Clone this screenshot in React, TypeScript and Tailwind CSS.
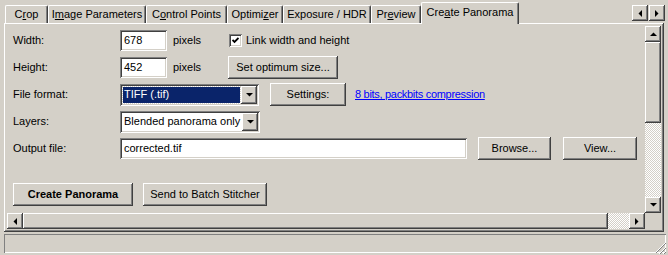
import React from "react";

const raised =
  "bg-[#d4d0c8] shadow-[inset_-1px_-1px_#404040,inset_1px_1px_#ffffff,inset_-2px_-2px_#808080,inset_2px_2px_#d4d0c8]";
const raisedEdge =
  "shadow-[inset_-1px_-1px_#404040,inset_1px_1px_#ffffff,inset_-2px_-2px_#808080,inset_2px_2px_#d4d0c8]";
const sunken =
  "bg-white shadow-[inset_1px_1px_#808080,inset_-1px_-1px_#ffffff,inset_2px_2px_#404040,inset_-2px_-2px_#d4d0c8]";
const dither =
  "bg-[repeating-conic-gradient(#ffffff_0_25%,#d4d0c8_0_50%)] bg-[length:2px_2px]";

function Arrow({ dir }: { dir: "up" | "down" | "left" | "right" }) {
  const pts = {
    up: "0,4 7,4 3.5,0.5",
    down: "0,0 7,0 3.5,3.5",
    left: "4,0 4,7 0.5,3.5",
    right: "0,0 0,7 3.5,3.5",
  }[dir];
  const vertical = dir === "up" || dir === "down";
  return (
    <svg width={vertical ? 7 : 4} height={vertical ? 4 : 7} viewBox={vertical ? "0 0 7 4" : "0 0 4 7"}>
      <polygon points={pts} fill="#000" />
    </svg>
  );
}

function ArrowButton({ dir, className = "" }: { dir: "up" | "down" | "left" | "right"; className?: string }) {
  return (
    <div className={`w-[16px] h-[16px] shrink-0 flex items-center justify-center ${raised} ${className}`}>
      <Arrow dir={dir} />
    </div>
  );
}

function Button({ children, w, bold = false }: { children: React.ReactNode; w: string; bold?: boolean }) {
  return (
    <div className={`${w} h-[23px] shrink-0 flex items-center justify-center ${raised} ${bold ? "font-bold" : ""}`}>
      {children}
    </div>
  );
}

function Combo({ value, w, selected = false }: { value: string; w: string; selected?: boolean }) {
  return (
    <div className={`${w} h-[22px] shrink-0 flex items-center p-[2px] ${sunken}`}>
      <div className="flex-1 h-full flex items-center pl-[1px] pr-[1px]">
        <div
          className={`flex-1 h-[16px] flex items-center pl-[1px] ${
            selected ? "bg-[#0a246a] text-white outline outline-1 outline-dotted outline-[#d4d0c8]" : ""
          }`}
        >
          {value}
        </div>
      </div>
      <ArrowButton dir="down" className="h-[18px]" />
    </div>
  );
}

function Field({ value, w }: { value: string; w: string }) {
  return (
    <div className={`${w} h-[21px] shrink-0 flex items-center pl-[4px] ${sunken}`}>{value}</div>
  );
}

const tabs = [
  { label: <>C<u>r</u>op</>, w: "w-[43px]" },
  { label: <>I<u>m</u>age Parameters</>, w: "w-[98px]" },
  { label: <>C<u>o</u>ntrol Points</>, w: "w-[81px]" },
  { label: <>Optimi<u>z</u>er</>, w: "w-[56px]" },
  { label: <>Exposure / HDR</>, w: "w-[88px]" },
  { label: <>Pr<u>e</u>view</>, w: "w-[50px]" },
];

export default function App() {
  return (
    <div className="w-[668px] h-[255px] bg-[#d4d0c8] font-['Liberation_Sans',Arial,sans-serif] text-[11px] text-black flex flex-col overflow-hidden leading-none">
      {/* Tab strip */}
      <div className="h-[23px] flex items-end pl-[5px] pr-[3px] relative z-10 shrink-0">
        {tabs.map((t, i) => (
          <div
            key={i}
            className={`${t.w} h-[18px] shrink-0 flex items-center justify-center border-l border-t border-white border-r border-r-[#404040] rounded-t-[2px] shadow-[inset_-1px_0_#808080]`}
          >
            {t.label}
          </div>
        ))}
        <div className="w-[98px] h-[22px] -mb-[1px] pb-[3px] shrink-0 flex items-center justify-center bg-[#d4d0c8] border-l border-t border-white border-r border-r-[#404040] rounded-t-[2px] shadow-[inset_-1px_0_#808080]">
          Cre<u>a</u>te Panorama
        </div>
        <div className="ml-auto self-start mt-[5px] flex gap-[1px]">
          <ArrowButton dir="left" />
          <ArrowButton dir="right" />
        </div>
      </div>

      {/* Panel */}
      <div className={`mx-[4px] h-[209px] shrink-0 p-[3px] flex flex-col ${raisedEdge}`}>
        <div className="flex-1 flex min-h-0">
          {/* Content */}
          <div className="flex-1 pl-[6px] pt-[4px] flex flex-col gap-[6px]">
            <div className="flex items-center h-[21px]">
              <div className="w-[107px] shrink-0">Width:</div>
              <Field value="678" w="w-[47px]" />
              <div className="w-[62px] shrink-0 pl-[6px]">pixels</div>
              <div className={`w-[13px] h-[13px] shrink-0 flex items-center justify-center ${sunken}`}>
                <svg width="7" height="7" viewBox="0 0 7 7">
                  <polyline points="0.5,3 2.5,5 6.5,1" fill="none" stroke="#000" strokeWidth="1.8" />
                </svg>
              </div>
              <div className="pl-[4px]">Link width and height</div>
            </div>
            <div className="flex items-center h-[21px]">
              <div className="w-[107px] shrink-0">Height:</div>
              <Field value="452" w="w-[47px]" />
              <div className="w-[61px] shrink-0 pl-[6px]">pixels</div>
              <Button w="w-[110px]">Set optimum size...</Button>
            </div>
            <div className="flex items-center h-[21px]">
              <div className="w-[107px] shrink-0">File format:</div>
              <Combo value="TIFF (.tif)" w="w-[139px]" selected />
              <div className="ml-[11px]">
                <Button w="w-[76px]">Settings:</Button>
              </div>
              <span className="ml-[9px] text-[#0000ff] underline tracking-[-0.3px]">8 bits, packbits compression</span>
            </div>
            <div className="flex items-center h-[21px]">
              <div className="w-[107px] shrink-0">Layers:</div>
              <Combo value="Blended panorama only" w="w-[140px]" />
            </div>
            <div className="flex items-center h-[21px]">
              <div className="w-[107px] shrink-0">Output file:</div>
              <Field value="corrected.tif" w="w-[347px]" />
              <div className="ml-[11px]">
                <Button w="w-[73px]">Browse...</Button>
              </div>
              <div className="ml-[12px]">
                <Button w="w-[74px]">View...</Button>
              </div>
            </div>
            <div className="flex items-center gap-[10px] mt-[18px]">
              <Button w="w-[120px]" bold>
                Create Panorama
              </Button>
              <Button w="w-[124px]">Send to Batch Stitcher</Button>
            </div>
          </div>
          {/* Vertical scrollbar */}
          <div className="w-[16px] shrink-0 flex flex-col">
            <ArrowButton dir="up" />
            <div className={`h-[81px] shrink-0 ${raised}`} />
            <div className={`flex-1 ${dither}`} />
            <ArrowButton dir="down" />
          </div>
        </div>
        {/* Horizontal scrollbar */}
        <div className="h-[16px] shrink-0 flex">
          <ArrowButton dir="left" />
          <div className={`flex-1 ${raised}`} />
          <div className={`w-[21px] shrink-0 ${dither}`} />
          <ArrowButton dir="right" />
          <div className="w-[16px] shrink-0" />
        </div>
      </div>

      {/* Status bar */}
      <div className="mx-[4px] mr-[2px] mt-[2px] h-[19px] shrink-0 flex justify-end items-end shadow-[inset_1px_1px_#808080,inset_-1px_-1px_#ffffff]">
        <svg width="12" height="12" viewBox="0 0 12 12" className="mb-[-1px]">
          <line x1="11" y1="1" x2="1" y2="11" stroke="#ffffff" />
          <line x1="12" y1="1" x2="2" y2="11" stroke="#808080" />
          <line x1="12" y1="5" x2="5" y2="12" stroke="#ffffff" />
          <line x1="12" y1="6" x2="6" y2="12" stroke="#808080" />
          <line x1="12" y1="9" x2="9" y2="12" stroke="#ffffff" />
          <line x1="12" y1="10" x2="10" y2="12" stroke="#808080" />
        </svg>
      </div>
    </div>
  );
}
